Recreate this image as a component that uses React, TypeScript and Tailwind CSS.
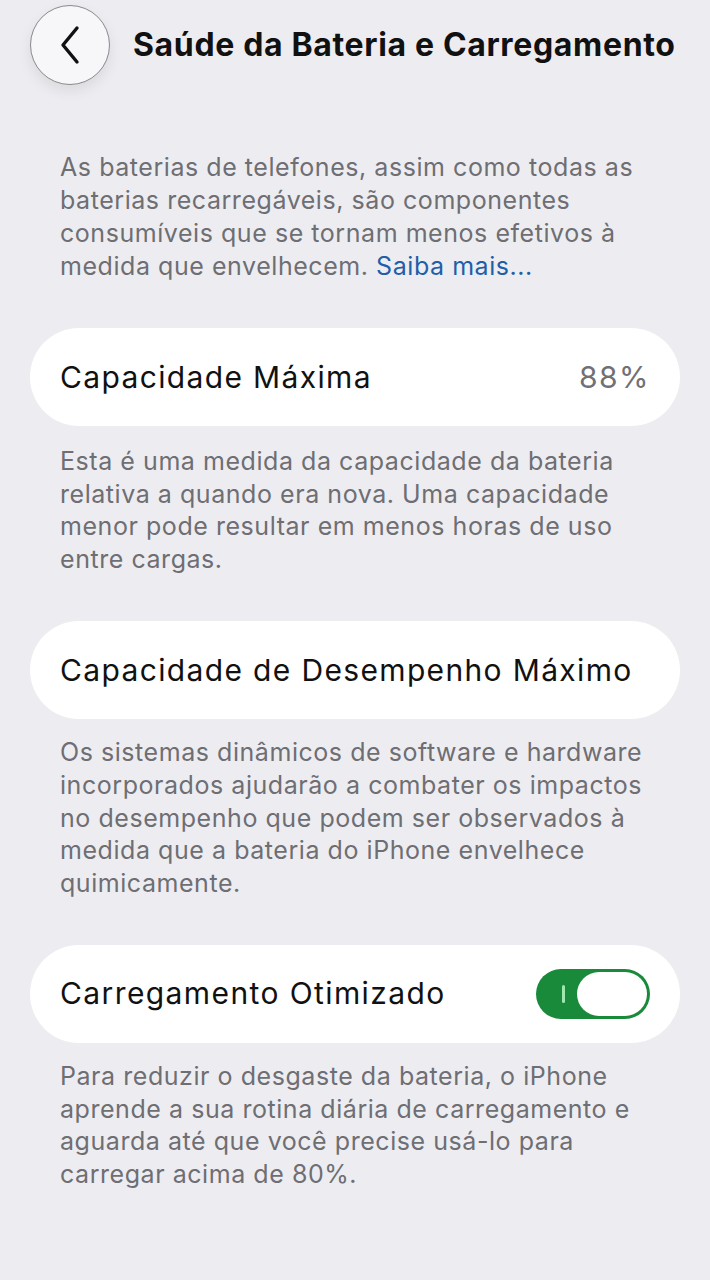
import React from "react";

const Card = ({ children }: { children: React.ReactNode }) => (
  <div className="mx-[30px] h-[98px] rounded-[49px] bg-white flex items-center justify-between px-[30px]">
    {children}
  </div>
);

const Lines = ({ lines, className }: { lines: React.ReactNode[]; className: string }) => (
  <p className={"pl-[60px] text-[25px] tracking-[0.55px] text-[#6e6e73] whitespace-nowrap " + className}>
    {lines.map((l, i) => (
      <span key={i} className="block">
        {l}
      </span>
    ))}
  </p>
);

const App = () => {
  return (
    <div
      className="min-h-[1280px] w-[710px] bg-[#ededf1] text-black"
      style={{ fontFamily: "Inter, 'Noto Sans', sans-serif" }}
    >
      <div className="flex items-center h-[90px] pl-[30px]">
        <div className="w-[80px] h-[80px] rounded-full bg-[#f7f7f9] border border-[#8a8a8e] shadow-[0_6px_14px_rgba(0,0,0,0.08)] flex items-center justify-center">
          <svg width="24" height="40" viewBox="0 0 24 40" fill="none">
            <path
              d="M19 3 L5 20 L19 37"
              stroke="#111"
              strokeWidth="3.4"
              strokeLinecap="round"
              strokeLinejoin="round"
            />
          </svg>
        </div>
        <h1 className="ml-[23px] text-[32px] font-bold tracking-[0.65px] text-[#111] whitespace-nowrap">
          Saúde da Bateria e Carregamento
        </h1>
      </div>

      <Lines
        className="mt-[61px] leading-[33px]"
        lines={[
          "As baterias de telefones, assim como todas as",
          "baterias recarregáveis, são componentes",
          "consumíveis que se tornam menos efetivos à",
          <>
            medida que envelhecem.{" "}
            <span className="text-[#1f5fa8]">Saiba mais...</span>
          </>,
        ]}
      />

      <div className="mt-[45px]">
        <Card>
          <span className="text-[30px] tracking-[1.35px] text-[#111]">Capacidade Máxima</span>
          <span className="text-[30px] tracking-[1.5px] text-[#707075]">88%</span>
        </Card>
      </div>
      <Lines
        className="mt-[19px] leading-[32.5px]"
        lines={[
          "Esta é uma medida da capacidade da bateria",
          "relativa a quando era nova. Uma capacidade",
          "menor pode resultar em menos horas de uso",
          "entre cargas.",
        ]}
      />

      <div className="mt-[46px]">
        <Card>
          <span className="text-[30px] tracking-[1.35px] text-[#111] whitespace-nowrap">
            Capacidade de Desempenho Máximo
          </span>
        </Card>
      </div>
      <Lines
        className="mt-[17px] leading-[32.75px]"
        lines={[
          "Os sistemas dinâmicos de software e hardware",
          "incorporados ajudarão a combater os impactos",
          "no desempenho que podem ser observados à",
          "medida que a bateria do iPhone envelhece",
          "quimicamente.",
        ]}
      />

      <div className="mt-[45px]">
        <Card>
          <span className="text-[30px] tracking-[1.4px] text-[#111]">
            Carregamento Otimizado
          </span>
          <div className="w-[114px] h-[50px] rounded-full bg-[#198a3a] flex items-center justify-end pr-[3px] relative">
            <span className="absolute left-[26px] top-[16px] w-[2.5px] h-[18px] bg-[#9fe6b2] rounded" />
            <span className="w-[70px] h-[44px] rounded-full bg-white" />
          </div>
        </Card>
      </div>
      <Lines
        className="mt-[17px] leading-[32.75px]"
        lines={[
          "Para reduzir o desgaste da bateria, o iPhone",
          "aprende a sua rotina diária de carregamento e",
          "aguarda até que você precise usá-lo para",
          "carregar acima de 80%.",
        ]}
      />
    </div>
  );
};

export default App;
